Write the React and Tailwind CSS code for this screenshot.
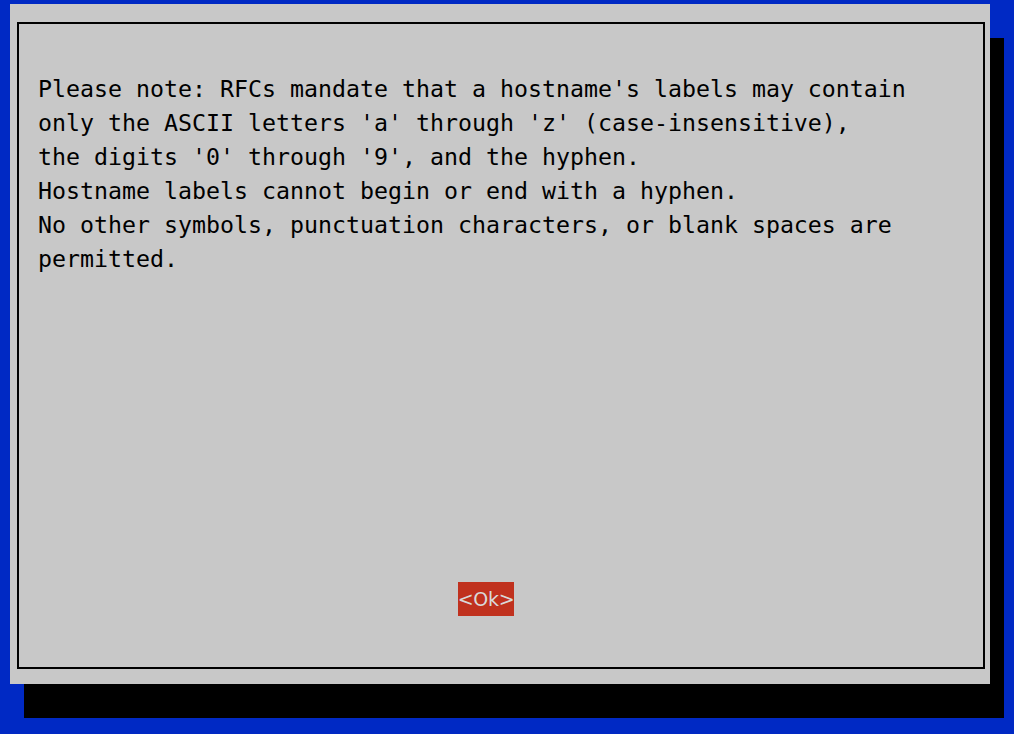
export default function App() {
  const lines = [
    "Please note: RFCs mandate that a hostname's labels may contain",
    "only the ASCII letters 'a' through 'z' (case-insensitive),",
    "the digits '0' through '9', and the hyphen.",
    "Hostname labels cannot begin or end with a hyphen.",
    "No other symbols, punctuation characters, or blank spaces are",
    "permitted.",
  ];

  return (
    <div className="w-[1014px] h-[734px] bg-[#0029c4] pt-[4px] pl-[10px] overflow-hidden">
      {/* DIALOG */}
      <div className="w-[980px] h-[680px] bg-[#c8c8c8] shadow-[14px_34px_0_0_#000] pt-[18px] pl-[7px]">
        <div className="w-[968px] h-[647px] border-2 border-black flex flex-col pt-[48px] pl-[19px]">
          {/* MESSAGE */}
          <div className="font-['DejaVu_Sans_Mono',monospace] text-[23.25px] leading-[34px] text-black whitespace-pre">
            {lines.map((l) => (
              <div key={l}>{l}</div>
            ))}
          </div>

          {/* OK BUTTON */}
          <div className="mt-auto mb-[51px] ml-[420px] self-start">
            <button className="w-[56px] h-[34px] bg-[#c0311e] text-[#d9d9d9] font-['DejaVu_Sans',sans-serif] text-[19px] leading-[34px] flex items-center justify-center tracking-[-0.3px]">
              &lt;Ok&gt;
            </button>
          </div>
        </div>
      </div>
    </div>
  );
}
